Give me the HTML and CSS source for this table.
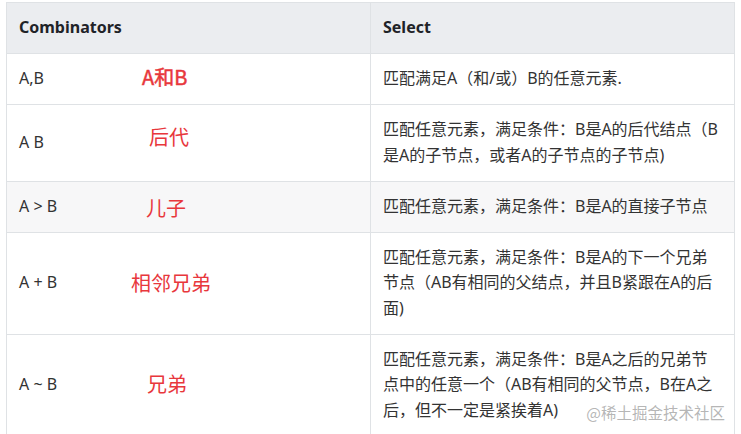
FILE: index.html
```html
<!DOCTYPE html>
<html lang="zh-CN">
<head>
<meta charset="utf-8">
<title>Combinators</title>
<link rel="stylesheet" href="styles.css">
</head>
<body>
<div class="page">
  <table class="sel-table">
    <thead>
      <tr>
        <th>Combinators</th>
        <th>Select</th>
      </tr>
    </thead>
    <tbody>
      <tr>
        <td class="code">A,B<span class="note note-1">A和B</span></td>
        <td>匹配满足A（和/或）B的任意元素.</td>
      </tr>
      <tr>
        <td class="code">A B<span class="note note-2">后代</span></td>
        <td>匹配任意元素，满足条件：B是A的后代结点（B是A的子节点，或者A的子节点的子节点)</td>
      </tr>
      <tr class="hover">
        <td class="code">A &gt; B<span class="note note-3">儿子</span></td>
        <td>匹配任意元素，满足条件：B是A的直接子节点</td>
      </tr>
      <tr>
        <td class="code">A + B<span class="note note-4">相邻兄弟</span></td>
        <td>匹配任意元素，满足条件：B是A的下一个兄弟节点（AB有相同的父结点，并且B紧跟在A的后面)</td>
      </tr>
      <tr>
        <td class="code">A ~ B<span class="note note-5">兄弟</span></td>
        <td>匹配任意元素，满足条件：B是A之后的兄弟节点中的任意一个（AB有相同的父节点，B在A之后，但不一定是紧挨着A)</td>
      </tr>
    </tbody>
  </table>
  <div class="watermark">@稀土掘金技术社区</div>
</div>
</body>
</html>
```

FILE: styles.css
```css
html, body {
  margin: 0;
  padding: 0;
  background: #fff;
}
body {
  font-family: "Noto Sans", "Noto Sans CJK SC", sans-serif;
  color: #333;
  font-size: 16px;
  overflow: hidden;
}
.page {
  position: relative;
  padding: 2px 6px 0 6px;
  height: 432px;
  overflow: hidden;
}
.sel-table {
  border-collapse: collapse;
  width: 729px;
  table-layout: fixed;
}
.sel-table th,
.sel-table td {
  border: 1px solid #dfe2e5;
  padding: 12.25px 12px;
  line-height: 25.5px;
  text-align: left;
  vertical-align: middle;
  width: 50%;
}
.sel-table th {
  background: #ebedf0;
  font-weight: 700;
  color: #1f2328;
}
.sel-table tr.hover td {
  background: #f7f7f8;
}
.sel-table td.code {
  position: relative;
  font-size: 16px;
}
.note {
  position: absolute;
  top: 50%;
  transform: translateY(-50%);
  font-family: "Noto Sans CJK SC", sans-serif;
  font-size: 20px;
  line-height: 20px;
  color: #e8373c;
  white-space: nowrap;
}
.note-1 { left: 135px; margin-top: -2px; -webkit-text-stroke: 0.5px #e8373c; }
.note-2 { left: 142px; margin-top: -6px; }
.note-3 { left: 139px; margin-top: 1px; }
.note-4 { left: 124px; margin-top: 0; }
.note-5 { left: 140px; margin-top: -1px; }
.watermark {
  position: absolute;
  right: 16px;
  bottom: 13px;
  font-family: "Noto Sans CJK SC", sans-serif;
  font-size: 15.5px;
  line-height: 18px;
  color: rgba(150, 150, 150, 0.7);
  text-shadow: 0 0 2px rgba(255, 255, 255, 0.9);
}
```
